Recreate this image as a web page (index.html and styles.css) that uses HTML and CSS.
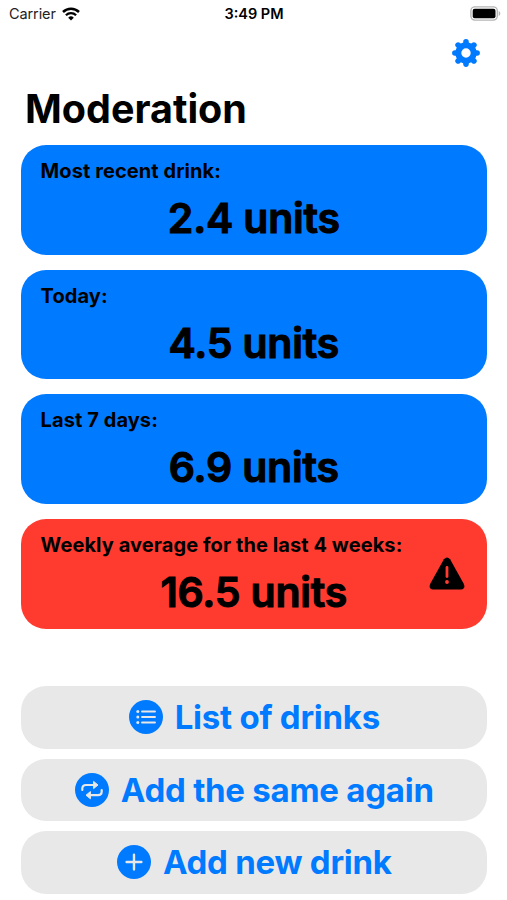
FILE: index.html
```html
<!DOCTYPE html>
<html lang="en">
<head>
    <meta charset="UTF-8">
    <meta name="viewport" content="width=device-width, initial-scale=1.0">
    <title>Moderation</title>
    <link rel="stylesheet" href="styles.css">
</head>
<body>
    <div class="status-bar">
        <div class="carrier">
            <span>Carrier</span>
            <svg class="wifi" viewBox="0 0 18 14" width="18" height="14">
                <path d="M1 5 A11.5 11.5 0 0 1 17 5" fill="none" stroke="#000" stroke-width="2.5"/>
                <path d="M3.9 8.2 A7.3 7.3 0 0 1 14.1 8.2" fill="none" stroke="#000" stroke-width="2.3"/>
                <path d="M9 13.6 L6.2 10.7 A4 4 0 0 1 11.8 10.7 Z"/>
            </svg>
        </div>
        <div class="time">3:49 PM</div>
        <svg class="battery" viewBox="0 0 31 15" width="31" height="15">
            <rect x="0.9" y="0.9" width="26.4" height="13.2" rx="4" fill="#fff" stroke="#b5b5b5" stroke-width="1.4"/>
            <rect x="2.7" y="2.7" width="22.8" height="9.6" rx="2"/>
            <path d="M28.7 5 C30.8 5.8 30.8 9.2 28.7 10 Z" fill="#b5b5b5"/>
        </svg>
    </div>

    <div class="toolbar">
        <svg class="gear" viewBox="-14 -14 28 28" width="28" height="28">
            <circle r="7.7" fill="none" stroke="#007aff" stroke-width="6"/>
            <g stroke="#007aff" stroke-width="5.6" stroke-linecap="round">
                <path d="M0 -9 V-11.1 M0 9 V11.1 M-9 0 H-11.1 M9 0 H11.1"/>
                <path d="M6.4 -6.4 L7.9 -7.9 M6.4 6.4 L7.9 7.9 M-6.4 6.4 L-7.9 7.9 M-6.4 -6.4 L-7.9 -7.9"/>
            </g>
        </svg>
    </div>

    <h1>Moderation</h1>

    <main>
        <section class="cards">
            <div class="card">
                <h2>Most recent drink:</h2>
                <p>2.4 units</p>
            </div>
            <div class="card">
                <h2>Today:</h2>
                <p>4.5 units</p>
            </div>
            <div class="card">
                <h2>Last 7 days:</h2>
                <p>6.9 units</p>
            </div>
            <div class="card card-warning">
                <h2>Weekly average for the last 4 weeks:</h2>
                <p>16.5 units</p>
                <svg class="warning" viewBox="0 0 36 33" width="36" height="33">
                    <path d="M14.9 2.2 Q18 -1.4 21.1 2.2 L34.6 26.5 Q37 31.7 32 32.5 H4 Q-1 31.7 1.4 26.5 Z"/>
                    <path d="M18 10.5 L18 19.5" stroke="#ff3b30" stroke-width="2.8" stroke-linecap="round"/>
                    <circle cx="18" cy="25" r="1.9" fill="#ff3b30"/>
                </svg>
            </div>
        </section>

        <section class="actions">
            <button>
                <svg viewBox="0 0 34 34" width="34" height="34">
                    <circle cx="17" cy="17" r="17" fill="#007aff"/>
                    <g stroke="#e8e8e8" stroke-width="1.9" stroke-linecap="round">
                        <path d="M13 11.5 H26 M13 17 H26 M13 22.5 H26"/>
                    </g>
                    <g fill="#e8e8e8">
                        <circle cx="8.8" cy="11.5" r="1.5"/>
                        <circle cx="8.8" cy="17" r="1.5"/>
                        <circle cx="8.8" cy="22.5" r="1.5"/>
                    </g>
                </svg>
                <span>List of drinks</span>
            </button>
            <button>
                <svg viewBox="0 0 34 34" width="34" height="34">
                    <circle cx="17" cy="17" r="17" fill="#007aff"/>
                    <g fill="none" stroke="#e8e8e8" stroke-width="2.2" stroke-linecap="round">
                        <path d="M7.3 17 V15.6 Q7.3 12 11 12 H18.5"/>
                        <path d="M26.7 17 V18.6 Q26.7 22.2 23 22.2 H15.5"/>
                    </g>
                    <g fill="#e8e8e8" stroke="#e8e8e8" stroke-width="1" stroke-linejoin="round">
                        <path d="M18.6 8.4 L23 12 L18.6 15.6 Z"/>
                        <path d="M15.4 18.6 L11 22.2 L15.4 25.8 Z"/>
                    </g>
                </svg>
                <span>Add the same again</span>
            </button>
            <button>
                <svg viewBox="0 0 34 34" width="34" height="34">
                    <circle cx="17" cy="17" r="17" fill="#007aff"/>
                    <path d="M17 9.6 V24.4 M9.6 17 H24.4" stroke="#e8e8e8" stroke-width="2.4" stroke-linecap="round"/>
                </svg>
                <span>Add new drink</span>
            </button>
        </section>
    </main>
</body>
</html>
```

FILE: styles.css
```css
* {
    box-sizing: border-box;
}

body {
    font-family: Inter, 'Liberation Sans', sans-serif;
    margin: 0;
    height: 900px;
    background-color: #fff;
    color: #000;
    overflow: hidden;
}

h1, h2, p {
    margin: 0;
}

.status-bar {
    display: grid;
    grid-template-columns: 1fr auto 1fr;
    align-items: center;
    height: 27px;
    padding: 0 8px 0 9px;
    font-size: 14.5px;
}

.carrier {
    display: flex;
    align-items: center;
    gap: 6.5px;
    color: #222;
    letter-spacing: -0.1px;
}

.time {
    font-weight: 600;
}

.battery {
    justify-self: end;
    margin-right: -2px;
}

.toolbar {
    display: flex;
    justify-content: flex-end;
    padding: 11.5px 27px 0 0;
    height: 57px;
}

h1 {
    padding-left: 25px;
    height: 61px;
    font-size: 39.5px;
    font-weight: 700;
    line-height: 51px;
}

main {
    padding: 0 20px 0 20.6px;
}

.cards {
    display: flex;
    flex-direction: column;
    gap: 14.8px;
}

.card {
    position: relative;
    height: 109.8px;
    padding: 14px 20px 0;
    border-radius: 25px;
    background-color: #007aff;
}

.card h2 {
    font-size: 20px;
    font-weight: 700;
    line-height: 24px;
    letter-spacing: 0.08px;
}

.card p {
    margin-top: 9px;
    font-size: 41px;
    font-weight: 600;
    line-height: 53px;
    letter-spacing: -0.2px;
    text-align: center;
    -webkit-text-stroke: 1.1px #000;
    stroke-linejoin: round;
}

.card-warning {
    background-color: #ff3b30;
}

.warning {
    position: absolute;
    top: 38.5px;
    right: 22px;
}

.actions {
    display: flex;
    flex-direction: column;
    gap: 10.2px;
    margin-top: 57.9px;
}

button {
    display: flex;
    align-items: center;
    justify-content: center;
    gap: 12px;
    height: 62.3px;
    padding: 0 0 1px 1px;
    border: none;
    border-radius: 25px;
    background-color: #e8e8e8;
    color: #007aff;
    font-family: inherit;
    font-size: 33px;
    font-weight: 700;
    letter-spacing: -0.25px;
    cursor: pointer;
}
```
